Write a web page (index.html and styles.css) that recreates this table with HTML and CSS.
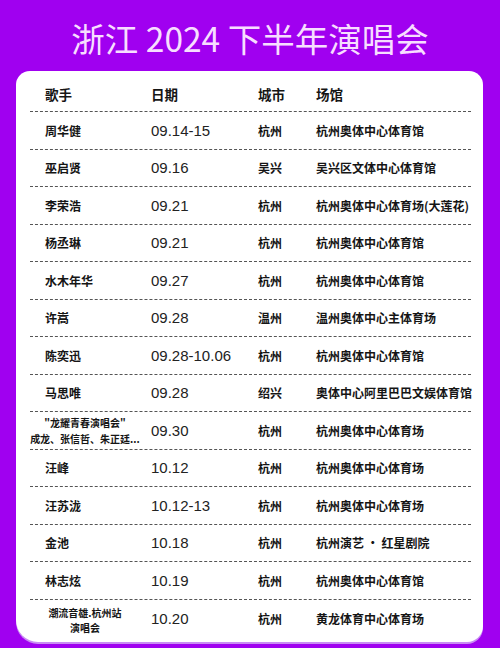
FILE: index.html
```html
<!DOCTYPE html>
<html lang="zh-CN">
<head>
<meta charset="utf-8">
<title>浙江 2024 下半年演唱会</title>
<link rel="stylesheet" href="styles.css">
</head>
<body>
<div class="page">
  <h1 class="title">浙江 2024 下半年演唱会</h1>
  <div class="card">
    <div class="row head"><span class="name">歌手</span><span>日期</span><span>城市</span><span>场馆</span></div>
    <div class="row"><span class="name">周华健</span><span class="date">09.14-15</span><span class="city">杭州</span><span class="venue">杭州奥体中心体育馆</span></div>
    <div class="row"><span class="name">巫启贤</span><span class="date">09.16</span><span class="city">吴兴</span><span class="venue">吴兴区文体中心体育馆</span></div>
    <div class="row"><span class="name">李荣浩</span><span class="date">09.21</span><span class="city">杭州</span><span class="venue">杭州奥体中心体育场(大莲花)</span></div>
    <div class="row"><span class="name">杨丞琳</span><span class="date">09.21</span><span class="city">杭州</span><span class="venue">杭州奥体中心体育馆</span></div>
    <div class="row"><span class="name">水木年华</span><span class="date">09.27</span><span class="city">杭州</span><span class="venue">杭州奥体中心体育馆</span></div>
    <div class="row"><span class="name">许嵩</span><span class="date">09.28</span><span class="city">温州</span><span class="venue">温州奥体中心主体育场</span></div>
    <div class="row"><span class="name">陈奕迅</span><span class="date">09.28-10.06</span><span class="city">杭州</span><span class="venue">杭州奥体中心体育馆</span></div>
    <div class="row"><span class="name">马思唯</span><span class="date">09.28</span><span class="city">绍兴</span><span class="venue">奥体中心阿里巴巴文娱体育馆</span></div>
    <div class="row"><span class="name multi">"龙耀青春演唱会"<br>成龙、张信哲、朱正廷...</span><span class="date">09.30</span><span class="city">杭州</span><span class="venue">杭州奥体中心体育场</span></div>
    <div class="row"><span class="name">汪峰</span><span class="date">10.12</span><span class="city">杭州</span><span class="venue">杭州奥体中心体育场</span></div>
    <div class="row"><span class="name">汪苏泷</span><span class="date">10.12-13</span><span class="city">杭州</span><span class="venue">杭州奥体中心体育场</span></div>
    <div class="row"><span class="name">金池</span><span class="date">10.18</span><span class="city">杭州</span><span class="venue">杭州演艺 · 红星剧院</span></div>
    <div class="row"><span class="name">林志炫</span><span class="date">10.19</span><span class="city">杭州</span><span class="venue">杭州奥体中心体育馆</span></div>
    <div class="row"><span class="name multi last">潮流音雄.杭州站<br>演唱会</span><span class="date">10.20</span><span class="city">杭州</span><span class="venue">黄龙体育中心体育场</span></div>
  </div>
</div>
</body>
</html>
```

FILE: styles.css
```css
html, body {
  margin: 0;
  padding: 0;
}
body {
  background: #a000f0;
  width: 500px;
  height: 648px;
  overflow: hidden;
  font-family: "Noto Sans CJK SC", sans-serif;
  color: #151515;
}
.page {
  display: flex;
  flex-direction: column;
}
.title {
  margin: 0;
  box-sizing: border-box;
  height: 71px;
  padding-top: 4px;
  display: flex;
  align-items: center;
  justify-content: center;
  font-family: "Noto Sans CJK SC", sans-serif;
  font-weight: 400;
  font-size: 33.5px;
  color: #f7ddff;
}
.card {
  margin: 0 17px 0 16px;
  box-sizing: border-box;
  height: 571px;
  background: #fff;
  border-radius: 14px 14px 16px 22px;
  padding: 0 12px 4px 14px;
  box-shadow: 0 2px 0 #c98cf4;
}
.row {
  display: grid;
  grid-template-columns: 121px 107px 58px 1fr;
  align-items: center;
  box-sizing: border-box;
  height: 37.5px;
  border-bottom: 1px dashed #555;
  white-space: nowrap;
}
.row:last-child {
  border-bottom: none;
}
.head {
  height: 41px;
  padding-top: 5px;
  font-size: 13.5px;
  font-weight: 700;
}
.name {
  padding-left: 15px;
}
.row:not(.head) .name,
.city,
.venue {
  font-size: 12px;
  font-weight: 700;
}
.venue {
  overflow: visible;
  min-width: 0;
}
.date {
  font-family: "Liberation Sans", Arial, sans-serif;
  font-size: 15px;
  color: #222;
}
.row .name.multi {
  padding-left: 0;
  padding-right: 11px;
  text-align: center;
  font-size: 10px;
  line-height: 16px;
  padding-top: 1px;
}
.row .name.multi.last {
  line-height: 15px;
  padding-top: 4px;
}
```
